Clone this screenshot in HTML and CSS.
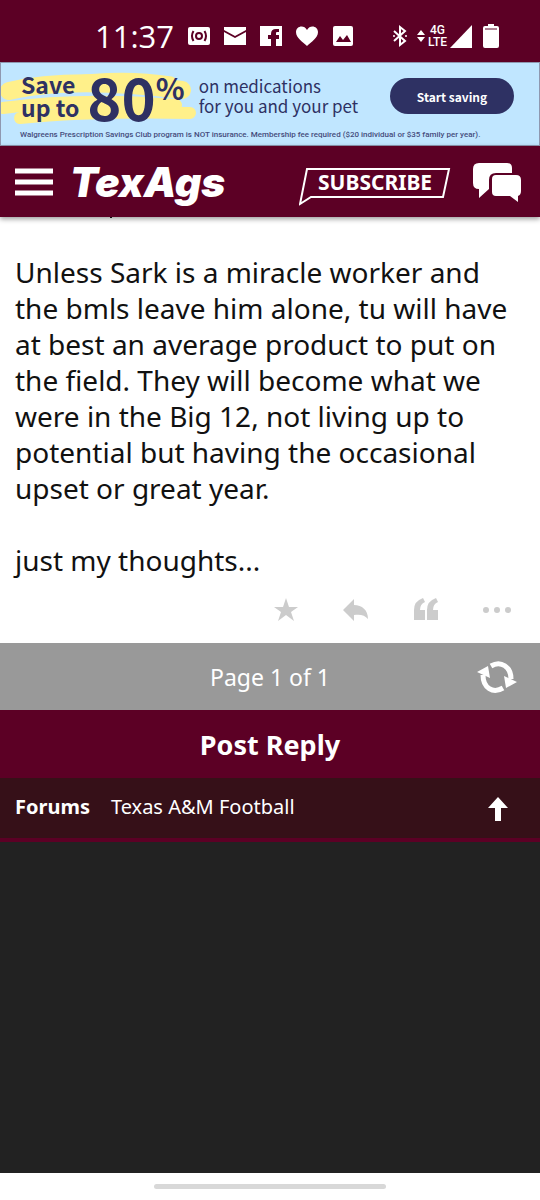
FILE: index.html
```html
<!DOCTYPE html>
<html lang="en">
<head>
  <meta charset="UTF-8">
  <meta name="viewport" content="width=device-width, initial-scale=1.0">
  <title>TexAgs</title>
  <link rel="stylesheet" href="styles.css">
</head>
<body>

  <!-- Status bar -->
  <div class="status">
    <span class="time">11:37</span>
    <div class="notifications">
      <svg width="22" height="20" viewBox="0 0 22 20"><rect y="1" width="22" height="18" rx="2" fill="#fff"/><g fill="none" stroke="#5c0025" stroke-width="2"><circle cx="11" cy="10" r="3"/><path d="M5.500 5Q2.500 10 5.500 15M16.500 5q3 5 0 10"/></g></svg>
      <svg width="22" height="20" viewBox="0 0 22 20"><path d="M0 1h22v3l-11 6L0 4zM0 6l11 6 11-6v13H0z" fill="#fff"/></svg>
      <svg width="22" height="22" viewBox="0 0 22 22"><path d="M0 1h22v20h-6v-7h3v-4h-3V8q0-1 1-1h2V4h-3q-5 0-5 5v1H8v4h3v7H0z" fill="#fff"/></svg>
      <svg width="22" height="22" viewBox="0 0 22 22"><path d="M11 21C7 17 0 13 0 7c0-6 8-8 11-2 3-6 11-4 11 2 0 6-7 10-11 14z" fill="#fff"/></svg>
      <svg width="22" height="22" viewBox="0 0 22 22"><rect x="1" y="1" width="20" height="20" rx="2" fill="#fff"/><path d="M4 17l4-6 3 4 4-5 4 7z" fill="#5c0025"/></svg>
    </div>
    <div class="system">
      <svg width="16" height="24" viewBox="0 0 16 24"><path d="M2 7l11 10-5 4V3l5 4L2 17" fill="none" stroke="#fff" stroke-width="2"/><circle cx="2" cy="12" r="1" fill="#fff"/><circle cx="14" cy="12" r="1" fill="#fff"/></svg>
      <svg class="data" width="8" height="12" viewBox="0 0 8 12"><path d="M0 5l4-5 4 5zM0 7h8l-4 5z" fill="#fff"/></svg>
      <span class="network"><span>4G</span><span>LTE</span></span>
      <svg width="22" height="23" viewBox="0 0 22 23"><path d="M0 23L22 0v23z" fill="#fff"/></svg>
      <svg class="battery" width="16" height="24" viewBox="0 0 16 24"><path d="M5 0h6v2h3q2 0 2 2v18q0 2-2 2H2q-2 0-2-2V4q0-2 2-2h3z" fill="#fff"/><path d="M2 5h12" stroke="#5c0025"/></svg>
    </div>
  </div>

  <!-- Ad -->
  <div class="ad">
    <svg class="swoosh" width="200" height="60" viewBox="0 0 200 60"><g fill="none" stroke="#fff08a" stroke-linecap="round"><path d="M8 24Q70 9 181 23" stroke-width="18"/><path d="M60 15Q120 6 170 14" stroke-width="9"/><path d="M2 41Q80 30 175 38" stroke-width="12"/><path d="M19 51Q90 44 189 46" stroke-width="12"/></g></svg>
    <div class="offer">
      <span class="save">Save<br>up to</span>
      <span class="amount">80</span>
      <span class="percent">%</span>
      <span class="pitch">on medications<br>for you and your pet</span>
      <button class="start">Start saving</button>
    </div>
    <p class="terms">Walgreens Prescription Savings Club program is NOT insurance. Membership fee required ($20 individual or $35 family per year).</p>
  </div>

  <!-- Header -->
  <header class="header">
    <button class="menu" aria-label="Menu"><svg width="38" height="28" viewBox="0 0 38 28"><path d="M0 3h38M0 14h38M0 25h38" stroke="#fff" stroke-width="5"/></svg></button>
    <a class="logo" href="#">TexAgs</a>
    <a class="subscribe" href="#">
      <svg class="outline" width="152" height="38" viewBox="0 0 152 38"><path d="M8 1h142l-6 28H12L1 36z" fill="none" stroke="#fff" stroke-width="2"/></svg>
      <span>SUBSCRIBE</span>
    </a>
    <button class="chat" aria-label="Messages"><svg width="48" height="40" viewBox="0 0 48 40"><path d="M6 1h28q5 0 5 5v5H23q-7 0-7 7v9L6 36v-9q-6 0-6-6V7q0-6 6-6z" fill="#fff"/><path d="M23 13h20q5 0 5 5v11q0 4-3 5v6l-8-6H23q-4 0-4-4V17q0-4 4-4z" fill="#fff"/></svg></button>
  </header>

  <!-- Post -->
  <main class="post">
    <p>Unless Sark is a miracle worker and the bmls leave him alone, tu will have at best an average product to put on the field. They will become what we were in the Big 12, not living up to potential but having the occasional upset or great year.</p>
    <p>just my thoughts...</p>
    <div class="actions">
      <button aria-label="Star"><svg width="24" height="24" viewBox="0 0 24 24"><path d="M12 0l3 9h9l-7 5 3 9-8-6-8 6 3-9-7-5h9z"/></svg></button>
      <button aria-label="Reply"><svg width="26" height="24" viewBox="0 0 26 24"><path d="M0 12L11 1v6c8 0 14 5 14 14-3-4-8-5-14-4v6z"/></svg></button>
      <button aria-label="Quote"><svg width="24" height="24" viewBox="0 0 24 24"><path d="M0 22V12Q0 3 9 0l2 4q-5 2-5 8h5v10zM13 22V12q0-9 9-12l2 4q-5 2-5 8h5v10z"/></svg></button>
      <button aria-label="More"><svg width="28" height="24" viewBox="0 0 28 24"><circle cx="3" cy="12" r="3"/><circle cx="14" cy="12" r="3"/><circle cx="25" cy="12" r="3"/></svg></button>
    </div>
  </main>

  <!-- Pagination -->
  <div class="pager">
    <span>Page 1 of 1</span>
    <button class="refresh" aria-label="Refresh"><svg width="40" height="32" viewBox="0 0 40 32"><g fill="none" stroke="#fff" stroke-width="5"><path d="M14 5C24-1 34 6 34 18"/><path d="M26 27C16 33 6 27 6 14"/></g><path d="M27 15l13 6-11 6zM13 17L0 11 11 5z" fill="#fff"/></svg></button>
  </div>

  <button class="reply">Post Reply</button>

  <!-- Breadcrumbs -->
  <nav class="crumbs">
    <a class="root" href="#">Forums</a>
    <a href="#">Texas A&amp;M Football</a>
    <a class="top" href="#" aria-label="Back to top"><svg width="20" height="24" viewBox="0 0 20 24"><path d="M10 0l10 11h-7v13H7V11H0z" fill="#fff"/></svg></a>
  </nav>

  <div class="filler"></div>

  <div class="gesture"><span></span></div>

</body>
</html>
```
FILE: styles.css
```css
* {
  box-sizing: border-box;
}

body {
  margin: 0;
  min-height: 100vh;
  display: flex;
  flex-direction: column;
  font-family: 'Noto Sans', 'Open Sans', sans-serif;
  background: #fff;
  color: #111;
}

svg {
  display: block;
  flex-shrink: 0;
}

a {
  color: #fff;
  text-decoration: none;
}

button {
  padding: 0;
  border: none;
  background: none;
  font-family: inherit;
  cursor: pointer;
}

.status {
  display: flex;
  align-items: center;
  height: 62px;
  padding: 10px 41px 0 95px;
  background: #5c0025;
  color: #fff;
}

.time {
  font-family: 'Open Sans', sans-serif;
  font-size: 31px;
  line-height: 50px;
}

.notifications {
  display: flex;
  align-items: center;
  gap: 14px;
  margin-left: 14px;
}

.system {
  display: flex;
  align-items: center;
  gap: 3px;
  margin-left: auto;
}

.data {
  margin-left: 6px;
}

.network {
  display: flex;
  flex-direction: column;
  align-items: center;
  font-family: Roboto, sans-serif;
  font-size: 12px;
  font-weight: 500;
  line-height: 12px;
}

.battery {
  margin-left: 8px;
}

.ad {
  position: relative;
  height: 84px;
  border: 1px solid #8f98b0;
  background: #c0e6ff;
  color: #2e3163;
  font-family: 'Noto Sans CJK SC', sans-serif;
}

.swoosh {
  position: absolute;
  left: 0;
  top: 4px;
}

.offer {
  position: relative;
  display: flex;
  align-items: center;
  height: 64px;
  padding: 2px 25px 0 20px;
}

.save {
  font-size: 23px;
  font-weight: bold;
  line-height: 23px;
}

.amount {
  margin-left: 8px;
  font-size: 58px;
  font-weight: bold;
  line-height: 64px;
}

.percent {
  align-self: flex-start;
  font-size: 30px;
  font-weight: bold;
  line-height: 44px;
}

.pitch {
  margin-left: 14px;
  font-size: 17px;
  line-height: 20px;
}

.start {
  width: 124px;
  height: 36px;
  margin-left: auto;
  border-radius: 18px;
  background: #2e3163;
  color: #fff;
  font-size: 12px;
  font-weight: bold;
}

.terms {
  margin: 0 0 0 19px;
  font-family: Roboto, sans-serif;
  font-size: 8px;
  font-weight: 500;
  line-height: 16px;
  color: #454c7c;
}

.header {
  position: relative;
  display: flex;
  align-items: center;
  height: 71px;
  padding: 0 19px 0 15px;
  background: #5c0025;
  box-shadow: 0 2px 5px rgba(0, 0, 0, 0.4);
}

.logo {
  margin-left: 17px;
  font-family: Inter, sans-serif;
  font-size: 41px;
  font-weight: 900;
  font-style: italic;
  line-height: 48px;
}

.subscribe {
  position: relative;
  width: 152px;
  margin-left: auto;
  padding-left: 19px;
  font-size: 21px;
  font-weight: bold;
  line-height: 28px;
}

.outline {
  position: absolute;
  left: 0;
  top: 0;
}

.chat {
  margin-left: 22px;
}

.post {
  position: relative;
  padding: 37px 15px 21px;
  font-size: 28px;
  line-height: 36px;
}

/* tail of the line scrolled under the header */
.post::before {
  content: '';
  position: absolute;
  left: 110px;
  top: 0;
  width: 2px;
  height: 1px;
  background: #111;
}

.post p {
  margin: 0 0 36px;
}

.post p:nth-child(2) {
  margin-bottom: 20px;
}

.actions {
  display: flex;
  justify-content: flex-end;
  gap: 45px;
  padding-right: 14px;
  fill: #ccc;
}

.pager {
  display: grid;
  grid-template-columns: 1fr auto 1fr;
  align-items: center;
  height: 67px;
  padding: 0 23px;
  background: #999;
  color: #fff;
  font-size: 23px;
}

.pager span {
  grid-column: 2;
}

.refresh {
  justify-self: end;
}

.reply {
  height: 68px;
  background: #5c0025;
  color: #fff;
  font-size: 27px;
  font-weight: bold;
}

.crumbs {
  display: flex;
  align-items: center;
  gap: 21px;
  height: 64px;
  padding: 0 32px 4px 15px;
  border-bottom: 4px solid #5c0025;
  background: #361018;
  font-size: 20px;
}

.root {
  font-weight: bold;
}

.top {
  margin-left: auto;
  padding-top: 6px;
}

.filler {
  flex: 1;
  background: #222;
}

.gesture {
  display: flex;
  justify-content: center;
  height: 27px;
  padding-top: 11px;
  background: #fff;
}

.gesture span {
  width: 43%;
  height: 5px;
  border-radius: 3px;
  background: #d8d8d8;
}
```
